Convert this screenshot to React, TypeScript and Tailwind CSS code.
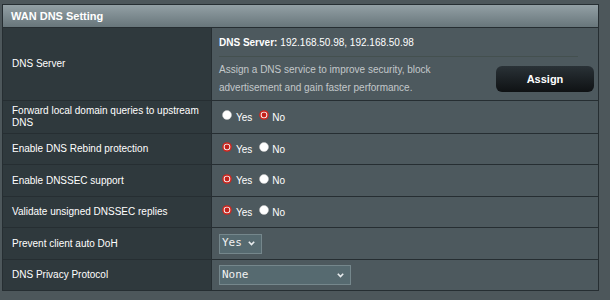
import React from "react";

const F = { fontFamily: '"Liberation Sans", Arial, sans-serif' };

function Radio({ on }: { on: boolean }) {
  return (
    <svg width="10" height="10" viewBox="0 0 10 10" className="shrink-0 relative -top-[2px]">
      {on ? (
        <>
          <circle cx="5" cy="5" r="4.8" fill="#d0261e" />
          <circle cx="5" cy="5" r="3.3" fill="#f4f4f4" />
          <circle cx="5" cy="5" r="2.4" fill="#c4201a" />
        </>
      ) : (
        <circle cx="5" cy="5" r="4.5" fill="#ffffff" stroke="#c8c8c8" strokeWidth="0.5" />
      )}
    </svg>
  );
}

function YesNo({ yes }: { yes: boolean }) {
  return (
    <div className="flex items-center text-[10px] text-white pl-[10px]">
      <Radio on={yes} />
      <span className="ml-[4px]">Yes</span>
      <span className="ml-[7px]"></span>
      <Radio on={!yes} />
      <span className="ml-[3px]">No</span>
    </div>
  );
}

function Chevron() {
  return (
    <svg width="7" height="5" viewBox="0 0 7 5">
      <path d="M0.8 0.8 L3.5 3.6 L6.2 0.8" fill="none" stroke="#e8ecee" strokeWidth="1.6" />
    </svg>
  );
}

function Select({ value, w }: { value: string; w: string }) {
  return (
    <div
      className={`${w} h-[20px] ml-[7px] flex items-center justify-between bg-[#566a70] border border-[#75878c] pl-[2px] pr-[6px] text-[11px] text-[#f2f2f2]`}
      style={{ fontFamily: '"DejaVu Sans Mono", monospace' }}
    >
      <span>{value}</span>
      <Chevron />
    </div>
  );
}

function Row({ label, h, children }: { label: React.ReactNode; h: string; children: React.ReactNode }) {
  return (
    <div className={`flex ${h} border-t border-[#262e32]`}>
      <div className="w-[209px] shrink-0 bg-[#2f393d] border-r border-[#262e32] flex items-center pl-[9px] pr-[4px] text-[10px] leading-[12px] text-white">
        {label}
      </div>
      <div className="flex-1 bg-[#4d595e] flex items-center">{children}</div>
    </div>
  );
}

export default function App() {
  return (
    <div className="w-[610px] h-[300px] bg-[#4d575b] pt-[4px] pl-[2px]" style={F}>
      <div className="w-[597px] border border-[#262e32]">
        <div className="h-[22px] bg-gradient-to-b from-[#93a0a5] to-[#68767b] flex items-center pl-[8px] text-[11px] font-bold text-white">
          WAN DNS Setting
        </div>
        <Row label="DNS Server" h="h-[73px]">
          <div className="flex-1 h-full flex flex-col pl-[7px] pr-[4px]">
            <div className="h-[29px] flex items-center border-b border-[#44504f] mr-[16px] text-[10px] text-white">
              <span className="font-bold">DNS Server:</span>
              <span className="ml-[3px]">192.168.50.98, 192.168.50.98</span>
            </div>
            <div className="flex-1 flex items-center justify-between">
              <div className="text-[10px] leading-[18px] text-[#c3c8ca] pt-[1px]">
                Assign a DNS service to improve security, block
                <br />
                advertisement and gain faster performance.
              </div>
              <div className="w-[98px] h-[26px] rounded-[6px] bg-gradient-to-b from-[#2a3237] to-[#0f1214] flex items-center justify-center text-[11px] font-bold text-white mt-[1px]">
                Assign
              </div>
            </div>
          </div>
        </Row>
        <Row label={<span><span className="whitespace-nowrap">Forward local domain queries to upstream</span><br />DNS</span>} h="h-[33px]">
          <YesNo yes={false} />
        </Row>
        <Row label="Enable DNS Rebind protection" h="h-[31px]">
          <YesNo yes={true} />
        </Row>
        <Row label="Enable DNSSEC support" h="h-[32px]">
          <YesNo yes={true} />
        </Row>
        <Row label="Validate unsigned DNSSEC replies" h="h-[31px]">
          <YesNo yes={true} />
        </Row>
        <Row label="Prevent client auto DoH" h="h-[32px]">
          <Select value="Yes" w="w-[43px]" />
        </Row>
        <Row label="DNS Privacy Protocol" h="h-[31px]">
          <Select value="None" w="w-[132px]" />
        </Row>
      </div>
    </div>
  );
}
